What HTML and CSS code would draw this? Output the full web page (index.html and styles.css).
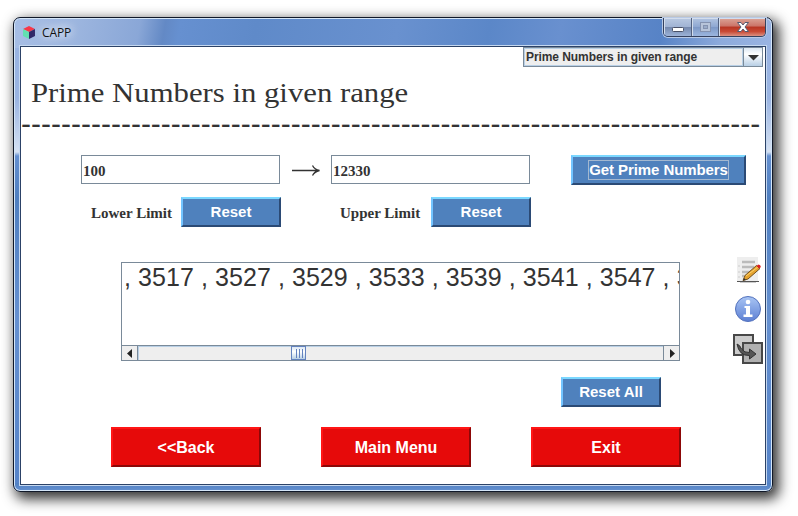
FILE: index.html
```html
<!DOCTYPE html>
<html lang="en">
<head>
<meta charset="utf-8">
<title>CAPP</title>
<link rel="stylesheet" href="styles.css">
</head>
<body>
<div class="window">
  <header class="titlebar">
    <svg class="app-icon" width="12" height="13" viewBox="0 0 12 13"><path d="M0 3L6 0l6 3-6 3z" fill="#f83848"/><path d="M0 3l6 3v7l-6-3z" fill="#62e0b0"/><path d="M12 3L6 6v7l6-3z" fill="#302868"/></svg>
    <span class="app-name">CAPP</span>
    <div class="controls">
      <span class="ctl min"><svg width="27" height="18"><rect x="8.500" y="9.500" width="11" height="4" rx="1" fill="#fff" stroke="#4a5268"/></svg></span>
      <span class="ctl max"><svg width="26" height="18"><rect x="8.500" y="4.500" width="10" height="9" fill="#b7c4da" stroke="#8492b0"/><rect x="11.500" y="7.500" width="4" height="3" fill="#99abc9" stroke="#8492b0"/></svg></span>
      <span class="ctl close"><svg width="46" height="18"><path d="M18.500 4.500h3.500l2 2.500 2-2.500h3.500l-3.500 4.500 3.500 4.500h-3.500l-2-2.500-2 2.500h-3.500l3.500-4.500z" fill="#fff" stroke="#555a70"/></svg></span>
    </div>
  </header>
  <main class="client">
    <div class="combo"><span class="combo-text">Prime Numbers in given range</span><span class="combo-arrow"><svg width="18" height="16"><path d="M4 7h11l-5.500 5.500z" fill="#333"/></svg></span></div>
    <h1><span>Prime Numbers in given range</span></h1>
    <div class="rule">--------------------------------------------------------------------------</div>
    <div class="row inputs">
      <div class="field">100</div>
      <svg class="arrow" width="30" height="16"><path d="M1 8.500h27M21.500 3.500q2 4 7 5-5 1-7 5" fill="none" stroke="#333" stroke-width="1.300"/></svg>
      <div class="field">12330</div>
      <div class="btn get"><span>Get Prime Numbers</span></div>
    </div>
    <div class="row limits">
      <span class="label">Lower Limit</span><div class="btn">Reset</div>
      <span class="label upper">Upper Limit</span><div class="btn">Reset</div>
    </div>
    <div class="row results">
      <div class="output">
        <div class="numbers">, 3517 , 3527 , 3529 , 3533 , 3539 , 3541 , 3547 , 3</div>
        <div class="scroll">
          <span class="end"><svg width="16" height="14"><path d="M10 3v9L5 7.500z" fill="#222"/></svg></span>
          <span class="track"><span class="thumb"></span></span>
          <span class="end right"><svg width="15" height="14"><path d="M6 3v9l5-4.500z" fill="#222"/></svg></span>
        </div>
      </div>
      <div class="tools">
        <svg class="note" width="26" height="28" viewBox="0 0 26 28"><path d="M1 1h21v25H1z" fill="#eee"/><path d="M1 25.500h22" stroke="#555"/><path d="M4 26.500h16" stroke="#ccc"/><path d="M6 6h13M6 11h12M6 16h11M6 20h8" stroke="#bbb" stroke-width="2.400"/><path d="M2 10h2M2 16h2M2 21h2" stroke="#ccc"/><path d="M7 24.500l2-5L20.500 9.500l3.500 3L12 23z" fill="#e5a32f" stroke="#74501b"/><path d="M10 20l12-9" stroke="#ffd36b"/><path d="M20.500 10l2-1.500q3 1 2 3l-1.500 1z" fill="#d92020"/><path d="M7 24.500l1-2.500 2 2z" fill="#333"/></svg>
        <svg width="28" height="28" viewBox="0 0 28 28"><defs><linearGradient id="g" x2="0" y2="1"><stop stop-color="#a9c5f4"/><stop offset="1" stop-color="#5c7fd3"/></linearGradient></defs><circle cx="14" cy="14" r="12.500" fill="url(#g)" stroke="#5372bd"/><circle cx="14" cy="7" r="2.300" fill="#fff"/><path d="M10.500 11h5.500v8.500h2.500V22h-9v-2.500H12V13h-1.500z" fill="#fff"/></svg>
        <svg width="30" height="30" viewBox="0 0 30 30"><path d="M1 1h19v20H1z" fill="#ccc" stroke="#484848" stroke-width="2"/><path d="M10 9h19v20H10z" fill="#b0b0b0" stroke="#484848" stroke-width="2"/><path d="M4 10q3 1 4.500 5 3 4 8 3.500V15l6.500 5-6.500 5v-3.500Q6 22 4 10z" fill="#555" stroke="#333"/></svg>
      </div>
    </div>
    <div class="row all"><div class="btn">Reset All</div></div>
    <div class="row nav"><div class="btn red">&lt;&lt;Back</div><div class="btn red">Main Menu</div><div class="btn red">Exit</div></div>
  </main>
</div>
</body>
</html>
```
FILE: styles.css
```css
* { box-sizing: border-box; }
body { margin: 0; width: 798px; height: 516px; overflow: hidden; background: #fff; color: #333; font-family: "Liberation Sans", sans-serif; }
svg { display: block; flex: none; }
.window {
  width: 760px; height: 475px; margin: 17px 0 0 13px; padding: 0 6px 6px;
  border: 1px solid #101828; border-radius: 7px;
  background:
    linear-gradient(100deg, #a7bee5 0, #9db6df 60px, #8aa7d7 125px, #6389c5 150px, #6690d0 165px, #5f8ac9 240px, #6991cf 380px, #5b87c8 470px, #6990cf 540px, #5783c6 640px, #8dabdc 700px, #9ab4e2 100%) 0 0 / 100% 30px no-repeat,
    linear-gradient(#4f80c2, #6490d0) 0 100% / 100% 8px no-repeat,
    linear-gradient(#9ab4e2 0, #9ab4e2 80px, #d5e1f2 134px, #6590d0 138px, #4f7fc0 180px, #6590d0 300px, #5583c8 100%);
  box-shadow: inset 0 0 0 1px #d5e6f8, 4px 5px 13px 2px rgba(0,0,0,.8);
}
.titlebar { height: 28px; display: flex; align-items: center; padding-left: 3px; }
.app-icon { margin-top: 1px; }
.app-name { margin-left: 7px; color: #111; font: 12px "Open Sans", sans-serif; letter-spacing: -.1px; text-shadow: 0 0 8px #fff, 0 0 12px #fff; }
.controls { align-self: flex-start; display: flex; margin-left: auto; height: 19px; border: 1px solid #35415e; border-top: 0; border-radius: 0 0 5px 5px; overflow: hidden; box-shadow: 0 0 0 1px #b8c9e5; }
.ctl { border-right: 1px solid #53617f; background: linear-gradient(#b8c8e1 0, #a0b3d4 50%, #7488ad 51%, #9cb3d8); box-shadow: inset 1px 1px #d3ddec; }
.max { background: linear-gradient(#b2c4e0, #8ea7d2 50%, #7d98c6 51%, #9cb6df); }
.close { border: 0; background: linear-gradient(#dca598, #cb7468 45%, #b73523 50%, #c94a35 75%, #dc9182); }
.client { height: 439px; border: 1px solid #2c4267; background: #fff; box-shadow: 0 0 0 1px #c5d8f0; display: flex; flex-direction: column; overflow: hidden; }
.combo { flex: none; align-self: flex-end; width: 240px; height: 20px; margin-right: 2px; display: flex; border: 1px solid #7a8a99; background: #eee; font: bold 12px/18px "Liberation Sans", sans-serif; }
.combo-text { flex: 1; padding-left: 2px; line-height: 19px; height: 18px; letter-spacing: -.08px; box-shadow: inset 0 0 0 1px #b8cfe5; white-space: nowrap; }
.combo-arrow { width: 19px; border-left: 1px solid #7a8a99; background: linear-gradient(#dde8f3, #fff 35%, #b8cfe5); }
h1 { flex: none; margin: 8px 0 0 10px; height: 36px; font: 27px/36px "Liberation Serif", serif; white-space: nowrap; }
h1 span { display: inline-block; transform: scaleX(1.138); transform-origin: 0 50%; }
.rule { flex: none; height: 34px; font-size: 30px; line-height: 25px; white-space: nowrap; }
.row { display: flex; flex: none; }
.inputs { margin: 10px 0 0 60px; height: 30px; }
.field { width: 199px; height: 29px; border: 1px solid #7a8a99; padding-left: 1px; font: bold 15px/31px "Liberation Serif", serif; }
.arrow { margin: 7px 10px 0 11px; }
.btn { width: 100px; height: 30px; border: 2px solid; border-color: #7bd8ff #2b4a75 #2b4a75 #73c4ff; background: #4f81bd; color: #fff; font-weight: bold; font-size: 15px; line-height: 26px; text-align: center; white-space: nowrap; }
.get { width: 175px; margin-left: 41px; padding-top: 3px; }
.get span { display: block; width: 141px; height: 20px; margin: 0 auto; border: 1px solid #a3b8d0; line-height: 18px; letter-spacing: -.08px; }
.limits { margin: 12px 0 0 70px; height: 30px; }
.label { width: 90px; font: bold 15px/32px "Liberation Serif", serif; }
.upper { width: 91px; margin-left: 59px; }
.results { margin: 28px 0 0 100px; height: 110px; }
.output { width: 559px; height: 99px; margin-top: 7px; border: 1px solid #7a8a99; overflow: hidden; display: flex; flex-direction: column; }
.numbers { flex: 1; padding-left: 2px; font-size: 25px; line-height: 29px; letter-spacing: .07px; white-space: nowrap; }
.scroll { height: 15px; border-top: 1px solid #7a8a99; display: flex; }
.end { width: 16px; background: #eee; border-right: 1px solid #7a8a99; }
.right { border: 0; border-left: 1px solid #7a8a99; }
.track { flex: 1; background: #eee; box-shadow: inset 1px 1px #b8cfe5; }
.thumb { display: block; width: 15px; height: 14px; margin-left: 153px; border: 1px solid #6382bf; background: linear-gradient(90deg, transparent 4px, #6382bf 4px 5px, transparent 5px 7px, #6382bf 7px 8px, transparent 8px 10px, #6382bf 10px 11px, transparent 11px) 0 2px / 100% 9px no-repeat, linear-gradient(#dce8f4, #fff 40%, #b8cfe5); }
.tools { width: 30px; margin-left: 53px; padding-top: 1px; display: flex; flex-direction: column; align-items: center; }
.note { margin-left: 2px; }
.tools svg + svg { margin-top: 11px; }
.all { margin: 12px 0 0 540px; }
.nav { margin: 20px 0 0 90px; gap: 60px; }
.red { width: 150px; height: 40px; border-color: #ff1515 #8c0808 #8c0808 #ff1515; background: #e60a0a; font-size: 16px; line-height: 37px; }
```
